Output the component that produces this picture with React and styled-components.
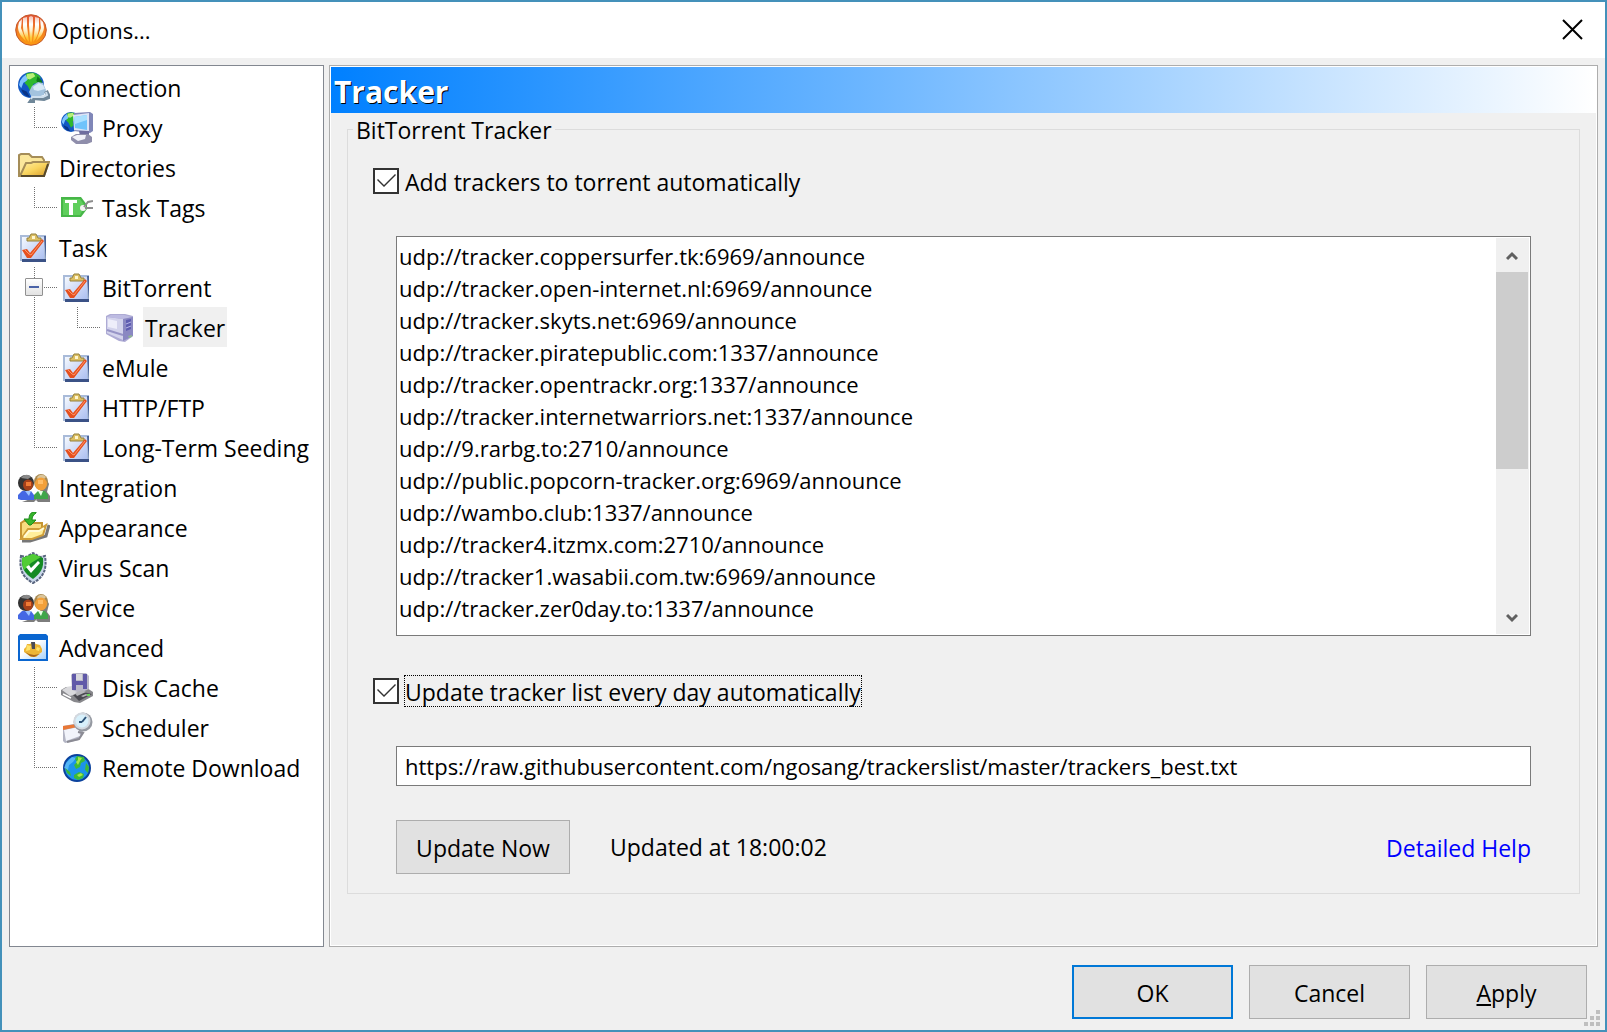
import React, { useState } from "react";
import styled, { createGlobalStyle, css } from "styled-components";

const GlobalStyle = createGlobalStyle`
  *, *::before, *::after { box-sizing: border-box; }
  body {
    margin: 0;
    background: #f0f0f0;
    color: #000;
    font: 23px/32px "Open Sans", "Noto Sans", sans-serif;
  }
  button, input, textarea { font: inherit; color: inherit; margin: 0; border-radius: 0; }
`;

const Window = styled.form`
  display: flex;
  flex-direction: column;
  min-height: 100vh;
  border: 2px solid #4491ba;
  position: relative;
`;

const TitleBar = styled.header`
  display: flex;
  align-items: center;
  gap: 5px;
  height: 56px;
  padding: 0 21px 0 13px;
  background: #fff;
`;

const WindowTitle = styled.h1`
  flex: 1;
  margin: 0;
  font-size: 22px;
  font-weight: 400;
`;

const CloseButton = styled.button`
  display: flex;
  padding: 0;
  border: 0;
  background: none;
`;

const Body = styled.main`
  display: flex;
  flex: 1;
  gap: 5px;
  padding: 7px 7px 0;
`;

const Tree = styled.ul`
  flex: 0 0 315px;
  margin: 0;
  padding: 1px 0 0 8px;
  list-style: none;
  background: #fff;
  border: 1px solid #828790;
`;

const TreeRow = styled.li`
  display: flex;
  align-items: center;
  height: 40px;
  > svg {
    margin-top: 2px;
  }
`;

const dots = (dir) =>
  `repeating-linear-gradient(${dir}, #707070 0 1px, transparent 1px 2px)`;

const guides = {
  line: css`
    background: ${dots("180deg")} 16px 0 / 1px 100% no-repeat;
  `,
  tee: css`
    background: ${dots("180deg")} 16px 0 / 1px 100% no-repeat,
      ${dots("90deg")} 16px 20px / 23px 1px no-repeat;
  `,
  end: css`
    background: ${dots("180deg")} 16px 0 / 1px 20px no-repeat,
      ${dots("90deg")} 16px 20px / 23px 1px no-repeat;
  `,
};

const Guide = styled.span`
  display: flex;
  align-items: center;
  align-self: stretch;
  flex: 0 0 43px;
  padding-left: 7px;
  ${(p) => guides[p.$kind]}
`;

const Expander = styled.button`
  display: flex;
  align-items: center;
  justify-content: center;
  width: 18px;
  height: 18px;
  padding: 0;
  border: 1px solid #919191;
  border-radius: 1px;
  background: linear-gradient(#fff, #e2e2e2);
  &::before {
    content: "";
    width: 10px;
    height: 2px;
    background: #4b63a7;
  }
`;

const TreeLabel = styled.button`
  height: 40px;
  margin-left: 7px;
  padding: 2px 2px 0;
  border: 0;
  white-space: nowrap;
  background: ${(p) => (p.$selected ? "#f0f0f0" : "none")};
`;

const Panel = styled.section`
  flex: 1;
  min-width: 0;
  display: flex;
  flex-direction: column;
  border: 1px solid #adadad;
  box-shadow: inset 0 0 0 1px #fff;
  padding: 1px;
`;

const PanelTitle = styled.h2`
  margin: 0;
  padding: 4px 3px 0;
  font-size: 30px;
  line-height: 42px;
  color: #fff;
  text-shadow: 1px 1px 0 #000;
  background: linear-gradient(90deg, #0080ff, #fff);
`;

const Group = styled.fieldset`
  margin: -1px 16px 0;
  padding: 0;
  min-width: 0;
  border: 1px solid #dcdcdc;
`;

const Legend = styled.legend`
  margin-left: 5px;
  padding: 2px 3px 0;
`;

const GroupBody = styled.div`
  display: flex;
  flex-direction: column;
  gap: 39px;
  padding: 19px 48px 19px;
`;

const CheckLine = styled.div`
  display: flex;
  align-items: center;
  gap: 5px;
  margin-left: -23px;
`;

const CheckBox = styled.input`
  appearance: none;
  display: grid;
  width: 26px;
  height: 26px;
  border: 2px solid #333;
  background: #fff;
  outline: none;
  &:checked::before {
    content: "";
    background: #333;
    clip-path: polygon(2px 10px, 3px 9px, 9px 15px, 20px 4px, 21px 5px, 9px 17px);
  }
`;

const CheckLabel = styled.label`
  border: 1px dotted ${(p) => (p.$focused ? "#000" : "transparent")};
  padding-top: 2px;
  line-height: 28px;
`;

const ListBox = styled.div`
  display: flex;
  height: 400px;
  border: 1px solid #7a7a7a;
  background: #fff;
  padding: 1px;
`;

const TrackerList = styled.textarea`
  flex: 1;
  min-width: 0;
  padding: 2px 1px;
  border: 0;
  outline: none;
  resize: none;
  background: none;
  font-size: 22px;
  white-space: pre;
  overflow: hidden;
`;

const ScrollBar = styled.div`
  display: flex;
  flex-direction: column;
  width: 33px;
  padding-right: 1px;
  background: #f0f0f0;
`;

const ScrollArrow = styled.button`
  display: flex;
  align-items: center;
  justify-content: center;
  height: 34px;
  padding: 2px 0 0;
  border: 0;
  background: none;
`;

const ScrollTrack = styled.div`
  flex: 1;
`;

const ScrollThumb = styled.div`
  height: 60%;
  background: #cdcdcd;
`;

const UrlInput = styled.input`
  width: 100%;
  height: 40px;
  padding: 0 8px;
  border: 1px solid #7a7a7a;
  background: #fff;
  outline: none;
  font-size: 22px;
`;

const ActionLine = styled.div`
  display: flex;
  align-items: center;
  gap: 40px;
  margin-top: -5px;
`;

const PushButton = styled.button`
  height: 54px;
  width: ${(p) => (p.$wide ? "174px" : "161px")};
  padding: 2px 0 0;
  border: ${(p) => (p.$primary ? "2px solid #0078d7" : "1px solid #adadad")};
  background: #e1e1e1;
`;

const Status = styled.span`
  flex: 1;
`;

const HelpLink = styled.a`
  padding-top: 2px;
  color: #00f;
  text-decoration: none;
`;

const Footer = styled.footer`
  display: flex;
  justify-content: flex-end;
  gap: 16px;
  padding: 18px 18px 11px;
`;

const Grip = styled.svg`
  position: absolute;
  right: 5px;
  bottom: 4px;
`;

const Icon = styled.svg.attrs({ width: 32, height: 32, viewBox: "0 0 32 32", "aria-hidden": true })`
  flex: none;
`;

function AppLogo() {
  return (
    <Icon>
      <defs>
        <linearGradient id="logo" x1="0" y1="0" x2="0" y2="1">
          <stop offset="0" stopColor="#e2553a" />
          <stop offset=".45" stopColor="#f07a24" />
          <stop offset="1" stopColor="#fb9a10" />
        </linearGradient>
        <linearGradient id="ray" gradientUnits="userSpaceOnUse" x1="0" y1="2" x2="0" y2="29">
          <stop offset="0" stopColor="#fff" stopOpacity=".6" />
          <stop offset=".3" stopColor="#fff" />
          <stop offset=".55" stopColor="#fff0c8" />
          <stop offset=".8" stopColor="#ffc838" />
          <stop offset="1" stopColor="#ffa818" />
        </linearGradient>
      </defs>
      <circle cx="16" cy="16" r="15.3" fill="url(#logo)" stroke="#c4582a" />
      <g fill="url(#ray)">
        <path d="M14 3l2-1 2 1 0 8-1 16-1 2-1-2-1-16z" />
        <path d="M8 4l4-1 0 9 2 16c-4-4-6-10-6-16z" />
        <path d="M24 4l-4-1 0 9-2 16c4-4 6-10 6-16z" />
        <path d="M4 8l3-3-1 9 5 13C6 23 3 18 3 13z" />
        <path d="M28 8l-3-3 1 9-5 13c5-4 8-9 8-14z" />
      </g>
    </Icon>
  );
}

function Globe({ cx, cy, r }) {
  return (
    <g transform={`translate(${cx - r} ${cy - r}) scale(${r / 12})`}>
      <circle cx="12" cy="12" r="12" fill="#1258c4" />
      <path d="M2 8c3-5 6-7 10-6l-3 6-4 2-2 5-2-3z" fill="#7fc4ff" />
      <path d="M7 2c5-3 11-1 14 3l-3 5-4 1 1 5-3 3-3-6-3-3 3-3z" fill="#2eb82e" />
      <path d="M8 2l6-1 2 3-5 3-3-1z" fill="#b8ef78" />
      <path d="M18 4l4 4 1 5-4-1-2-4z" fill="#0c7a1c" />
      <path d="M3 16l5 2 3 5c-4 0-7-3-8-7z" fill="#0a3487" />
    </g>
  );
}

function ConnectionIcon() {
  return (
    <Icon>
      <Globe cx={13} cy={13} r={13} />
      <path d="M11 20l3-6 6-4 5 1 3 7-2 5-7 2-6-1z" fill="#a3c3de" />
      <path d="M15 15l6-4 4 2 2 4-7 2-4-1z" fill="#d7e9f6" />
      <path d="M28 19l2 4 1 2-5 2-11-1-2 3h4" fill="none" stroke="#6f8799" strokeWidth="4" />
      <path d="M28 20l1 3-4 2-11 0-1 2" fill="none" stroke="#cfe0ee" strokeWidth="2" />
    </Icon>
  );
}

function ProxyIcon() {
  return (
    <Icon>
      <Globe cx={10} cy={10} r={10} />
      <path d="M13 1l16-1 3 2v17l-3 2-16-2z" fill="#8087b8" />
      <path d="M12 3l16-2v18l-15-1z" fill="#dce3f5" />
      <path d="M13 5l13-2v15l-12-2z" fill="#6fc3fb" />
      <path d="M13 5l13-2v5l-12 4z" fill="#a9e0ff" />
      <path d="M18 19h10v5h-9z" fill="#6e6c9e" />
      <path d="M10 25l5-3h12l4 3v5l-5 2H15l-5-4z" fill="#8f8eab" />
      <path d="M11 25l5-2h9l-1 4-7 2z" fill="#f1f1f8" />
    </Icon>
  );
}

function DirectoriesIcon() {
  return (
    <Icon>
      <defs>
        <linearGradient id="folder" x1="0" y1="0" x2="1" y2="1">
          <stop offset="0" stopColor="#fff0a8" />
          <stop offset=".5" stopColor="#f9d55f" />
          <stop offset="1" stopColor="#d79a28" />
        </linearGradient>
      </defs>
      <path d="M1 24V3l2-1h8l3 3h10l2 3v16z" fill="#fbe79b" stroke="#a58d58" strokeWidth="2" />
      <path d="M2 24L8 11h5l2-1h16l-5 14z" fill="url(#folder)" stroke="#a58d58" strokeWidth="2" />
      <path d="M3 24h23l4-12" fill="none" stroke="#56482a" strokeWidth="2" />
    </Icon>
  );
}

function TagIcon() {
  return (
    <Icon>
      <path d="M0 5h20l6 8v4l-6 8H0z" fill="#47b648" />
      <path d="M2 7h17l5 7-5 9H2z" fill="#5fce5c" />
      <path d="M4 8h12v3h-4v12H8V11H4z" fill="#fff" />
      <circle cx="22" cy="16" r="3" fill="#f4f4f4" />
      <path d="M23 15l4-5 5-1M24 16h8" fill="none" stroke="#8d8d8d" strokeWidth="2" />
    </Icon>
  );
}

function ClipboardIcon() {
  return (
    <Icon>
      <defs>
        <linearGradient id="sheet" x1="0" y1="0" x2="1" y2="1">
          <stop offset="0" stopColor="#f8fbff" />
          <stop offset="1" stopColor="#a9bdf0" />
        </linearGradient>
      </defs>
      <path d="M3 4h24v24H3z" fill="url(#sheet)" stroke="#a9bbd9" strokeWidth="2" />
      <path d="M26 4h2v24H4v2h24z" fill="#4a6296" />
      <path d="M4 27h24v3H4z" fill="#3b5286" />
      <path d="M9 9V6h2l2-4h5l2 4h3v3z" fill="#dcbf62" stroke="#93803c" />
      <path d="M14 4h3v3h-3z" fill="#fff6cf" />
      <path d="M4 18l5-1 3 4L24 7l2 2-13 17h-4z" fill="#e6501f" />
      <path d="M7 18l4 4 2 1L24 9" fill="none" stroke="#ff9468" />
    </Icon>
  );
}

function ServerIcon() {
  return (
    <Icon>
      <path d="M2 4l4-2h15l8 2v20l-8 6-6-1L2 22z" fill="#aeabd4" />
      <path d="M3 5l16 2v21L3 21z" fill="#d3d3ec" />
      <path d="M3 5l4-2h13l8 2-9 2z" fill="#bdbbe2" />
      <path d="M4 7l9 2v8l-9-2z" fill="#eeeefa" />
      <path d="M3 18l16 5" stroke="#9794c6" strokeWidth="2" />
      <path d="M19 7l10-2v19l-10 5z" fill="#8a88c2" />
      <path d="M22 8l5-1v10l-5 2z" fill="#5f5db0" />
      <path d="M22 12l5-2M22 16l5-2" stroke="#b6b4e6" />
      <path d="M24 24l4-1v2l-3 1z" fill="#8fb493" />
    </Icon>
  );
}

function PeopleIcon() {
  return (
    <Icon>
      <path d="M18 28l2 2h12v-6l-3-4 2-8-3-6z" fill="#7d7d7d" />
      <path d="M4 30h12l2-2v-3z" fill="#7d7d7d" />
      <ellipse cx="23" cy="10" rx="7" ry="8" fill="#a8884f" />
      <path d="M19 6c1-4 7-4 9-1l-2 2h-6z" fill="#d9c49a" />
      <ellipse cx="23" cy="12" rx="6" ry="6.5" fill="#f2a03a" />
      <path d="M20 8h5v4h-5z" fill="#ffbe68" />
      <path d="M16 27v-4l4-4h7l3 4v4z" fill="#3fa64a" />
      <path d="M20 19h5l-2 5z" fill="#e6ffe6" />
      <circle cx="8" cy="11" r="8" fill="#333" />
      <path d="M3 6c3-4 8-4 10-1l-3 2z" fill="#8a8a8a" />
      <ellipse cx="10" cy="13" rx="5" ry="5.5" fill="#a5401a" />
      <path d="M8 10h5v4H8z" fill="#ef7a35" />
      <path d="M0 27v-4l4-4h9l3 4v5H3z" fill="#4468e4" />
      <path d="M7 19h6l-2 5z" fill="#9cc4ff" />
    </Icon>
  );
}

function AppearanceIcon() {
  return (
    <Icon>
      <path d="M4 29h8l16-5 3-11" fill="none" stroke="#777" strokeWidth="3" />
      <path d="M3 27V11l3-2h5l3 2h10v5" fill="#f8dc80" stroke="#c59532" strokeWidth="2" />
      <path d="M3 27l7-10h12l6-4-3 10-11 4z" fill="#ffef9b" stroke="#cf9e38" strokeWidth="2" />
      <path d="M6 25l5-6h10l5-3" fill="none" stroke="#fffbd7" strokeWidth="2" />
      <path d="M18 0h-3c-3 1-4 4-4 7H6l5 6h2l5-5h-4c0-3 1-5 4-7z" fill="#37b52b" stroke="#1d8a1a" />
    </Icon>
  );
}

function ShieldIcon() {
  return (
    <Icon>
      <path d="M3 4l5 1 7-4 7 4 5-1c2 13-1 21-12 27C4 25 1 17 3 4z" fill="#c9d7ea" stroke="#58647e" strokeWidth="2" strokeDasharray="3 1" />
      <path d="M4 6l11-4 10 4c1 10-2 15-10 21C7 22 3 16 4 6z" fill="#158a23" />
      <path d="M4 6l11-4 8 3-10 6-7 7C4 13 4 10 4 6z" fill="#51cc36" />
      <path d="M8 15l3-2 2 3 7-7 2 2-9 10z" fill="#fff" />
    </Icon>
  );
}

function AdvancedIcon() {
  return (
    <Icon>
      <defs>
        <linearGradient id="pane" x1="0" y1="0" x2="1" y2="1">
          <stop offset=".4" stopColor="#fff" />
          <stop offset="1" stopColor="#a9d2f8" />
        </linearGradient>
      </defs>
      <path d="M0 4l2-2h26l2 2v25H0z" fill="#0a66d0" />
      <path d="M2 8h26v19H2z" fill="url(#pane)" />
      <path d="M6 17l2-2 1-3h3l3-2 3 2 4 1 2 4v3l-3 2-3 3h-5l-4-3-3-2z" fill="#edb636" />
      <path d="M7 20l5 4 4 1 6-3-6 1-5-1z" fill="#a5641d" />
      <path d="M9 13l4 1-1 4-4 1zM19 15l3 1-1 3-3-1z" fill="#ffe36a" />
      <path d="M13 10h4v7h-3z" fill="#4b4b55" />
    </Icon>
  );
}

function DiskIcon() {
  return (
    <Icon>
      <path d="M0 18l5-3 18-1 9 6v4l-13 7-6-1L0 23z" fill="#88888c" />
      <path d="M1 18l5-3h9l4 6-10 3z" fill="#d9d9dc" />
      <path d="M2 22l8 4" stroke="#fff" strokeWidth="1.5" />
      <path d="M10 3l2-2h13l3 3v13l-9 4-8-3z" fill="#b9b8c8" />
      <path d="M11 2h4v16h-4zM22 2h4v15h-4zM15 9h8v4h-8z" fill="#6059a8" />
      <path d="M15 2h6v6h-6z" fill="#d8d8dd" />
      <path d="M12 23l10-3 9 2-13 7z" fill="#4a4a50" />
      <path d="M14 21l7-3 4 2-9 4zM20 24l5-2 2 1-5 2z" fill="#b6b6ba" />
      <path d="M26 22h3v2h-3z" fill="#67d755" />
    </Icon>
  );
}

function SchedulerIcon() {
  return (
    <Icon>
      <path d="M2 14l16-3 4 9-4 8-14 3-2-2z" fill="#b3b5c4" />
      <path d="M3 18l15-3 1 9-14 5z" fill="#f2f4fb" />
      <path d="M2 14l14-2v3L2 18z" fill="#e97836" />
      <path d="M17 20l5 1-4 6-12 3" fill="none" stroke="#8b8b94" strokeWidth="2" />
      <circle cx="22" cy="10" r="9.5" fill="#9599a1" />
      <circle cx="21" cy="9" r="8.5" fill="#d3d9e0" />
      <circle cx="21" cy="9" r="6.5" fill="#d7f0fb" />
      <path d="M21 10l4-5M21 10h-3" stroke="#2b5075" strokeWidth="2" />
    </Icon>
  );
}

function RemoteIcon() {
  return (
    <Icon>
      <circle cx="16" cy="16" r="13" fill="#1c93ec" stroke="#0b429d" strokeWidth="2" />
      <path d="M5 11l6-6 4 1-3 4-4 3-1 5-4-2z" fill="#6cc4fb" opacity=".7" />
      <path d="M16 4l7 1 1 4-4 2-1 4-4 2-2-4 3-3-2-3zM13 23l5-3 5 2-1 4-5 2-4-2zM25 11l3 4-1 6-3-3zM4 16l5 4 1 4-4-3z" fill="#3cb93a" />
      <path d="M17 5l4 1-2 3-2 4-2-3 2-2zM16 23l4-2 2 2-4 2z" fill="#a5e64a" />
    </Icon>
  );
}

const ITEMS = [
  { label: "Connection", icon: ConnectionIcon, guides: [] },
  { label: "Proxy", icon: ProxyIcon, guides: ["end"] },
  { label: "Directories", icon: DirectoriesIcon, guides: [] },
  { label: "Task Tags", icon: TagIcon, guides: ["end"] },
  { label: "Task", icon: ClipboardIcon, guides: [] },
  { label: "BitTorrent", icon: ClipboardIcon, guides: ["tee"], expandable: true },
  { label: "Tracker", icon: ServerIcon, guides: ["line", "end"] },
  { label: "eMule", icon: ClipboardIcon, guides: ["tee"] },
  { label: "HTTP/FTP", icon: ClipboardIcon, guides: ["tee"] },
  { label: "Long-Term Seeding", icon: ClipboardIcon, guides: ["end"] },
  { label: "Integration", icon: PeopleIcon, guides: [] },
  { label: "Appearance", icon: AppearanceIcon, guides: [] },
  { label: "Virus Scan", icon: ShieldIcon, guides: [] },
  { label: "Service", icon: PeopleIcon, guides: [] },
  { label: "Advanced", icon: AdvancedIcon, guides: [] },
  { label: "Disk Cache", icon: DiskIcon, guides: ["tee"] },
  { label: "Scheduler", icon: SchedulerIcon, guides: ["tee"] },
  { label: "Remote Download", icon: RemoteIcon, guides: ["end"] },
];

const TRACKERS = [
  "udp://tracker.coppersurfer.tk:6969/announce",
  "udp://tracker.open-internet.nl:6969/announce",
  "udp://tracker.skyts.net:6969/announce",
  "udp://tracker.piratepublic.com:1337/announce",
  "udp://tracker.opentrackr.org:1337/announce",
  "udp://tracker.internetwarriors.net:1337/announce",
  "udp://9.rarbg.to:2710/announce",
  "udp://public.popcorn-tracker.org:6969/announce",
  "udp://wambo.club:1337/announce",
  "udp://tracker4.itzmx.com:2710/announce",
  "udp://tracker1.wasabii.com.tw:6969/announce",
  "udp://tracker.zer0day.to:1337/announce",
].join("\n");

export default function App() {
  const [addTrackers, setAddTrackers] = useState(true);
  const [autoUpdate, setAutoUpdate] = useState(true);

  return (
    <>
      <GlobalStyle />
      <Window onSubmit={(e) => e.preventDefault()}>
        <TitleBar>
          <AppLogo />
          <WindowTitle>Options...</WindowTitle>
          <CloseButton type="button" aria-label="Close">
            <svg width="22" height="22" viewBox="0 0 22 22">
              <path d="M1 1l19 19M20 1L1 20" stroke="#000" strokeWidth="2" />
            </svg>
          </CloseButton>
        </TitleBar>

        <Body>
          <Tree role="tree" aria-label="Option pages">
            {ITEMS.map(({ label, icon: ItemIcon, guides: cells, expandable }) => (
              <TreeRow key={label} role="treeitem" aria-selected={label === "Tracker"}>
                {cells.map((kind, i) => (
                  <Guide key={i} $kind={kind}>
                    {expandable && <Expander type="button" aria-label="Collapse BitTorrent" />}
                  </Guide>
                ))}
                <ItemIcon />
                <TreeLabel type="button" $selected={label === "Tracker"}>
                  {label}
                </TreeLabel>
              </TreeRow>
            ))}
          </Tree>

          <Panel>
            <PanelTitle>Tracker</PanelTitle>
            <Group>
              <Legend>BitTorrent Tracker</Legend>
              <GroupBody>
                <CheckLine>
                  <CheckBox
                    id="add-trackers"
                    type="checkbox"
                    checked={addTrackers}
                    onChange={(e) => setAddTrackers(e.target.checked)}
                  />
                  <CheckLabel htmlFor="add-trackers">Add trackers to torrent automatically</CheckLabel>
                </CheckLine>
                <ListBox>
                  <TrackerList aria-label="Trackers" spellCheck={false} defaultValue={TRACKERS} />
                  <ScrollBar>
                    <ScrollArrow type="button" aria-label="Scroll up">
                      <svg width="12" height="10" viewBox="0 0 12 10">
                        <path d="M1 8l5-5 5 5" fill="none" stroke="#606060" strokeWidth="3" />
                      </svg>
                    </ScrollArrow>
                    <ScrollTrack>
                      <ScrollThumb />
                    </ScrollTrack>
                    <ScrollArrow type="button" aria-label="Scroll down">
                      <svg width="12" height="10" viewBox="0 0 12 10">
                        <path d="M1 2l5 5 5-5" fill="none" stroke="#606060" strokeWidth="3" />
                      </svg>
                    </ScrollArrow>
                  </ScrollBar>
                </ListBox>
                <CheckLine>
                  <CheckBox
                    id="auto-update"
                    type="checkbox"
                    checked={autoUpdate}
                    onChange={(e) => setAutoUpdate(e.target.checked)}
                  />
                  <CheckLabel htmlFor="auto-update" $focused>
                    Update tracker list every day automatically
                  </CheckLabel>
                </CheckLine>
                <UrlInput
                  aria-label="Tracker list address"
                  defaultValue="https://raw.githubusercontent.com/ngosang/trackerslist/master/trackers_best.txt"
                />
                <ActionLine>
                  <PushButton type="button" $wide>Update Now</PushButton>
                  <Status>Updated at 18:00:02</Status>
                  <HelpLink href="#help">Detailed Help</HelpLink>
                </ActionLine>
              </GroupBody>
            </Group>
          </Panel>
        </Body>

        <Footer>
          <PushButton type="submit" $primary>OK</PushButton>
          <PushButton type="button">Cancel</PushButton>
          <PushButton type="button"><u>A</u>pply</PushButton>
        </Footer>
        <Grip width="16" height="16" viewBox="0 0 16 16" fill="#bfbfbf" aria-hidden="true">
          <path d="M12 0h4v4h-4zM6 6h4v4H6zM12 6h4v4h-4zM0 12h4v4H0zM6 12h4v4H6zM12 12h4v4h-4z" />
        </Grip>
      </Window>
    </>
  );
}
